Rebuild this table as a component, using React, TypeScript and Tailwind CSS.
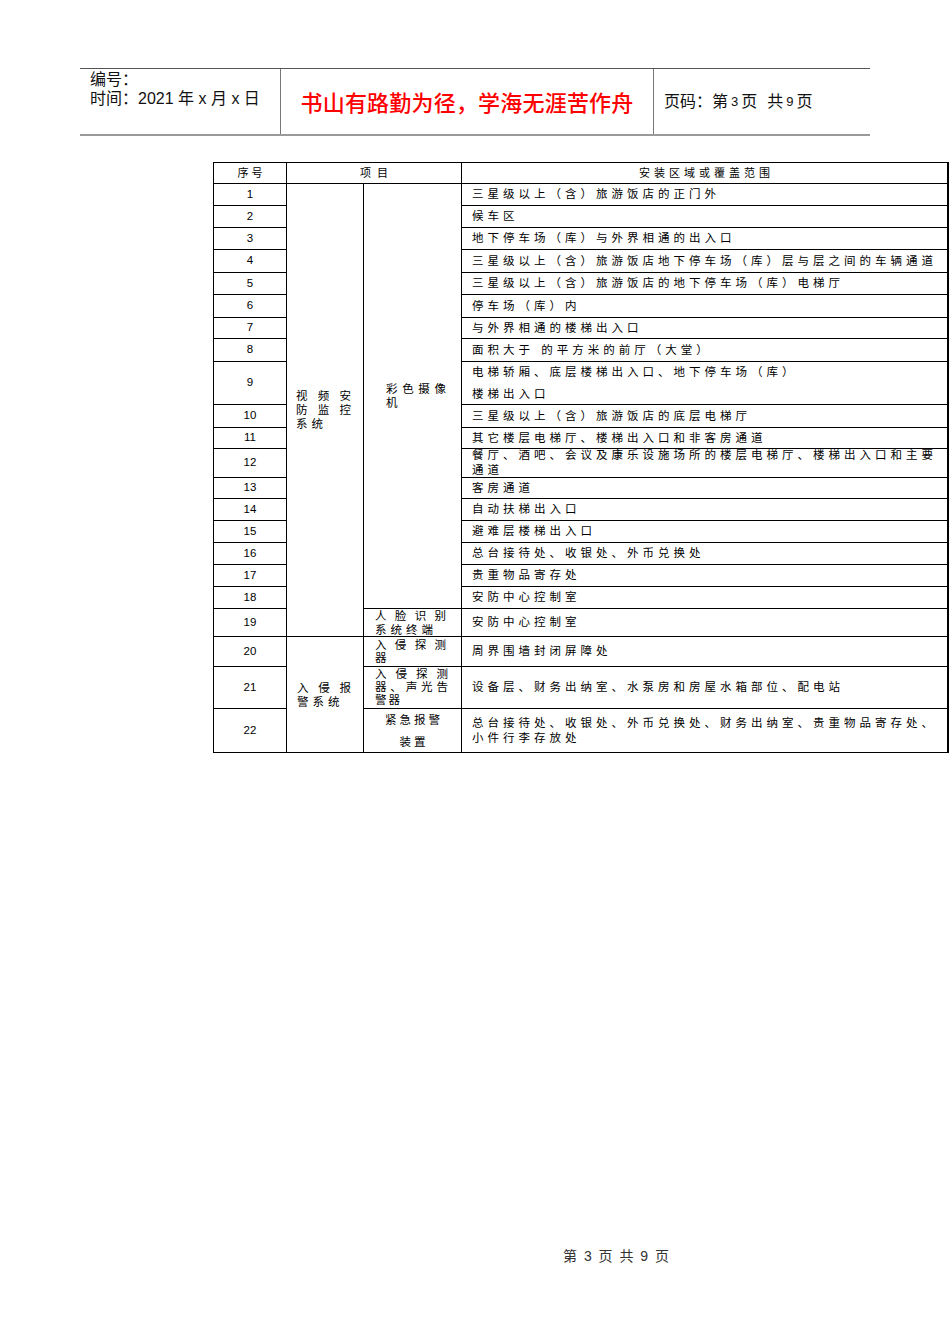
const cjk = "font-['Liberation_Sans','Noto_Sans_CJK_SC',sans-serif]";

const numCell =
  "flex items-center justify-center border-r border-b border-black text-[11.5px] font-['Liberation_Sans',sans-serif] text-black";
const textCell =
  "flex flex-col justify-center border-r-2 border-b border-black pl-[10px] text-[11.5px] tracking-[4px] leading-[15px] text-black whitespace-nowrap";

const rows: { n: string; lines: string[]; lead?: string }[] = [
  { n: "1", lines: ["三星级以上（含）旅游饭店的正门外"] },
  { n: "2", lines: ["候车区"] },
  { n: "3", lines: ["地下停车场（库）与外界相通的出入口"] },
  { n: "4", lines: ["三星级以上（含）旅游饭店地下停车场（库）层与层之间的车辆通道"] },
  { n: "5", lines: ["三星级以上（含）旅游饭店的地下停车场（库）电梯厅"] },
  { n: "6", lines: ["停车场（库）内"] },
  { n: "7", lines: ["与外界相通的楼梯出入口"] },
  { n: "8", lines: ["面积大于 的平方米的前厅（大堂）"] },
  { n: "9", lines: ["电梯轿厢、底层楼梯出入口、地下停车场（库）", "楼梯出入口"], lead: "leading-[22px]" },
  { n: "10", lines: ["三星级以上（含）旅游饭店的底层电梯厅"] },
  { n: "11", lines: ["其它楼层电梯厅、楼梯出入口和非客房通道"] },
  { n: "12", lines: ["餐厅、酒吧、会议及康乐设施场所的楼层电梯厅、楼梯出入口和主要", "通道"] },
  { n: "13", lines: ["客房通道"] },
  { n: "14", lines: ["自动扶梯出入口"] },
  { n: "15", lines: ["避难层楼梯出入口"] },
  { n: "16", lines: ["总台接待处、收银处、外币兑换处"] },
  { n: "17", lines: ["贵重物品寄存处"] },
  { n: "18", lines: ["安防中心控制室"] },
];

function Lines({ lines, justifyAll }: { lines: string[]; justifyAll?: boolean }) {
  return (
    <>
      {lines.map((l, i) => (
        <div
          key={i}
          className={
            justifyAll || i < lines.length - 1
              ? "whitespace-nowrap text-justify [text-align-last:justify]"
              : "whitespace-nowrap"
          }
        >
          {l}
        </div>
      ))}
    </>
  );
}

function Row({ n, lines, lead }: { n: string; lines: string[]; lead?: string }) {
  return (
    <>
      <div className={numCell}>{n}</div>
      <div className={`${textCell} ${lead ?? ""}`}>
        {lines.map((l, i) => (
          <div key={i}>{l}</div>
        ))}
      </div>
    </>
  );
}

const sideCell =
  "flex flex-col justify-center border-r border-b border-black text-[11.5px] tracking-[4px] leading-[14px] text-black";

export default function App() {
  return (
    <div className={`w-[950px] min-h-[1344px] bg-white overflow-hidden ${cjk}`}>
      {/* page header */}
      <div className="mt-[68px] ml-[80px] w-[790px] h-[68px] flex border-t border-t-[#555] border-b-2 border-b-[#9a9a9a]">
        <div className="w-[201px] border-r border-[#777] pl-[10px] pt-[1px] text-[16px] leading-[19px] text-[#111]">
          <div>编号：</div>
          <div>时间：2021 年 x 月 x 日</div>
        </div>
        <div className="w-[373px] border-r border-[#777] flex items-center justify-center pt-[4px]">
          <span className="text-[22px] font-medium text-[#f00] tracking-[0.2px]">
            书山有路勤为径，学海无涯苦作舟
          </span>
        </div>
        <div className="flex-1 flex items-center pl-[10px] pt-[1px] text-[16px] text-[#111]">
          <span>页码：第</span>
          <span className="mx-[3px] text-[13px]">3</span>
          <span>页</span>
          <span className="ml-[10px]">共</span>
          <span className="mx-[3px] text-[13px]">9</span>
          <span>页</span>
        </div>
      </div>

      {/* table */}
      <div className="mt-[26px] ml-[213px] w-[736px] grid grid-cols-[73px_77px_98px_487px] grid-rows-[21px_22px_22px_22px_23px_22px_23px_21px_23px_43px_23px_21px_29px_21px_22px_22px_22px_22px_22px_28px_30px_42px_44px] border-l border-t border-black">
        <div className="flex items-center justify-center border-r border-b border-black text-[11px] tracking-[3px] pl-[3px]">
          序号
        </div>
        <div className="col-span-2 flex items-center justify-center border-r border-b border-black text-[11px] tracking-[6px] pl-[6px]">
          项目
        </div>
        <div className="flex items-center justify-center border-r-2 border-b border-black text-[11px] tracking-[4px] pl-[4px]">
          安装区域或覆盖范围
        </div>

        {/* row 1 with spanning cells */}
        <div className={numCell}>1</div>
        <div className={`row-span-19 ${sideCell} pl-[9px] pr-[8px]`}>
          <Lines lines={["视频安", "防监控", "系统"]} />
        </div>
        <div className={`row-span-18 ${sideCell} pl-[22px] pr-[11px]`}>
          <Lines lines={["彩色摄像", "机"]} />
        </div>
        <div className={textCell}>
          <div>{rows[0].lines[0]}</div>
        </div>

        {rows.slice(1).map((r) => (
          <Row key={r.n} {...r} />
        ))}

        {/* row 19 */}
        <div className={numCell}>19</div>
        <div className={`${sideCell} px-[11px] pt-[1px]`}>
          <Lines lines={["人脸识别", "系统终端"]} />
        </div>
        <div className={textCell}>安防中心控制室</div>

        {/* row 20 */}
        <div className={numCell}>20</div>
        <div className={`row-span-3 ${sideCell} pl-[10px] pr-[8px]`}>
          <Lines lines={["入侵报", "警系统"]} />
        </div>
        <div className="flex flex-col justify-center border-r border-b border-black px-[11px] text-[11.5px] tracking-[4px] leading-[13px] text-black">
          <Lines lines={["入侵探测", "器"]} />
        </div>
        <div className={textCell}>周界围墙封闭屏障处</div>

        {/* row 21 */}
        <div className={numCell}>21</div>
        <div className="flex flex-col justify-center border-r border-b border-black px-[11px] text-[11.5px] tracking-[2px] leading-[13px] text-black">
          <Lines lines={["入侵探测", "器、声光告", "警器"]} />
        </div>
        <div className={textCell}>设备层、财务出纳室、水泵房和房屋水箱部位、配电站</div>

        {/* row 22 */}
        <div className={numCell}>22</div>
        <div className="flex flex-col justify-center items-center border-r border-b border-black text-[11.5px] tracking-[3px] pl-[3px] leading-[22px]">
          <div>紧急报警</div>
          <div>装置</div>
        </div>
        <div className={textCell}>
          <div>总台接待处、收银处、外币兑换处、财务出纳室、贵重物品寄存处、</div>
          <div>小件行李存放处</div>
        </div>
      </div>

      {/* page footer */}
      <div className="mt-[495px] pl-[563px] text-[14px] leading-[16px] tracking-[1.5px] text-[#333]">
        第 3 页 共 9 页
      </div>
    </div>
  );
}
